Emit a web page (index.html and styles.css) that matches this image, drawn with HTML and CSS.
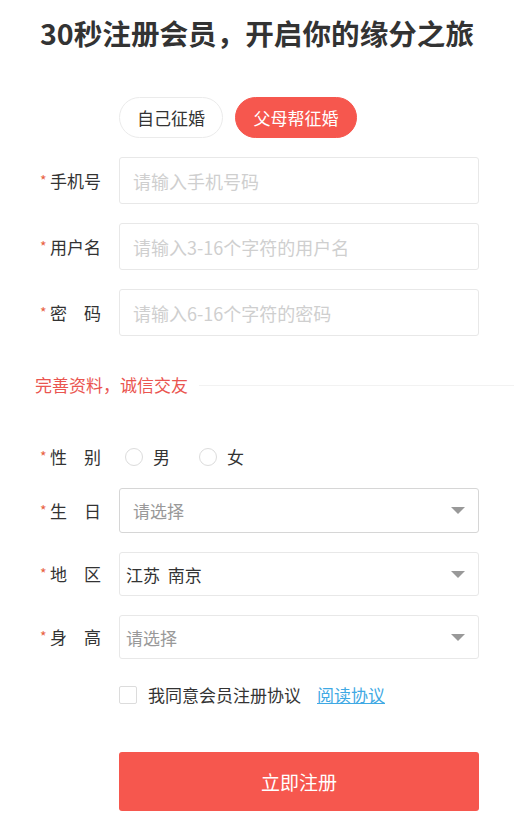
FILE: index.html
```html
<!DOCTYPE html>
<html lang="zh-CN">
<head>
<meta charset="utf-8">
<title>注册</title>
<link rel="stylesheet" href="styles.css">
</head>
<body>
<div class="page">
  <h1 class="title">30秒注册会员，开启你的缘分之旅</h1>

  <div class="tabs">
    <span class="tab">自己征婚</span>
    <span class="tab tab-active">父母帮征婚</span>
  </div>

  <div class="row row-input first">
    <label class="lbl"><span class="star">*</span><span class="txt">手机号</span></label>
    <input class="field" type="text" placeholder="请输入手机号码">
  </div>
  <div class="row row-input">
    <label class="lbl"><span class="star">*</span><span class="txt">用户名</span></label>
    <input class="field" type="text" placeholder="请输入3-16个字符的用户名">
  </div>
  <div class="row row-input">
    <label class="lbl"><span class="star">*</span><span class="txt">密码</span></label>
    <input class="field" type="password" placeholder="请输入6-16个字符的密码">
  </div>

  <div class="section">
    <span class="section-text">完善资料，诚信交友</span>
    <span class="section-line"></span>
  </div>

  <div class="row row-gender">
    <label class="lbl"><span class="star">*</span><span class="txt">性别</span></label>
    <div class="radios">
      <span class="radio"></span><span class="radio-text">男</span>
      <span class="radio"></span><span class="radio-text">女</span>
    </div>
  </div>

  <div class="row row-select first-select">
    <label class="lbl"><span class="star">*</span><span class="txt">生日</span></label>
    <div class="select sel-first"><span class="ph">请选择</span><span class="caret"></span></div>
  </div>
  <div class="row row-select">
    <label class="lbl"><span class="star">*</span><span class="txt">地区</span></label>
    <div class="select"><span class="val">江苏 南京</span><span class="caret"></span></div>
  </div>
  <div class="row row-select">
    <label class="lbl"><span class="star">*</span><span class="txt">身高</span></label>
    <div class="select"><span class="ph">请选择</span><span class="caret"></span></div>
  </div>

  <div class="row row-agree">
    <span class="lbl"></span>
    <div class="agree">
      <span class="checkbox"></span>
      <span class="agree-text">我同意会员注册协议</span>
      <a class="agree-link" href="#">阅读协议</a>
    </div>
  </div>

  <div class="row row-submit">
    <span class="lbl"></span>
    <button class="submit" type="button">立即注册</button>
  </div>
</div>
</body>
</html>
```

FILE: styles.css
```css
* { box-sizing: border-box; }
html, body { margin: 0; padding: 0; background: #fff; }
body {
  font-family: "Noto Sans CJK SC", "Noto Sans", sans-serif;
  color: #333;
}
.page { width: 514px; padding-top: 13px; padding-bottom: 12px; }

.title {
  margin: 0;
  font-size: 28.6px;
  line-height: 40px;
  font-weight: 700;
  text-align: center;
  color: #333;
}

.tabs {
  display: flex;
  gap: 12px;
  margin-top: 44px;
  padding-left: 119px;
}
.tab {
  height: 41px;
  line-height: 39px;
  padding: 0 17px;
  border: 1px solid #ebebeb;
  border-radius: 21px;
  font-size: 17px;
  color: #333;
}
.tab-active {
  background: #f6574e;
  border-color: #f6574e;
  color: #fff;
  padding: 0 17.5px;
}

.row { display: flex; align-items: center; }
.lbl {
  width: 119px;
  flex: none;
  display: flex;
  align-items: center;
  padding-left: 40px;
  font-size: 17px;
  color: #333;
}
.star {
  width: 10px;
  color: #e8613f;
  font-size: 14px;
  line-height: 1;
  position: relative;
  top: -1px;
}
.txt {
  width: 51px;
  text-align: justify;
  text-align-last: justify;
  line-height: 24px;
}

.row-input { margin-top: 19px; }
.field {
  width: 360px;
  height: 47px;
  border: 1px solid #e8e8e8;
  border-radius: 3px;
  padding: 0 13px;
  font-family: inherit;
  font-size: 18px;
  color: #333;
  outline: none;
}
.field::placeholder { color: #cfcfcf; }

.section {
  display: flex;
  align-items: center;
  margin-top: 37px;
  padding-left: 35px;
}
.section-text {
  font-size: 17px;
  line-height: 24px;
  color: #ea5550;
}
.section-line {
  flex: 1;
  height: 1px;
  background: #f2f2f2;
  margin-left: 11px;
}

.row-gender { margin-top: 48px; }
.radios { display: flex; align-items: center; padding-left: 6px; }
.radio {
  width: 18px;
  height: 18px;
  border: 1px solid #dcdcdc;
  border-radius: 50%;
}
.radio-text {
  font-size: 17px;
  line-height: 24px;
  margin-left: 10px;
  margin-right: 29px;
}

.row-select { margin-top: 19px; }
.row-select.first-select { margin-top: 19px; }
.select {
  width: 360px;
  height: 44px;
  border: 1px solid #e8e8e8;
  border-radius: 3px;
  display: flex;
  align-items: center;
  justify-content: space-between;
  padding: 0 13px 0 6px;
  font-size: 17px;
}
.select.sel-first {
  height: 45px;
  padding-left: 13px;
  border-color: #d6d6d6;
}
.ph { color: #999; }
.val { color: #333; word-spacing: 4px; }
.caret {
  width: 0;
  height: 0;
  border-left: 7px solid transparent;
  border-right: 7px solid transparent;
  border-top: 7px solid #999;
}

.row-agree { margin-top: 24px; }
.agree { display: flex; align-items: center; }
.checkbox {
  width: 18px;
  height: 18px;
  border: 1px solid #dcdcdc;
  border-radius: 2px;
}
.agree-text {
  margin-left: 11px;
  font-size: 17px;
  line-height: 24px;
  color: #333;
}
.agree-link {
  margin-left: 16px;
  font-size: 17px;
  line-height: 24px;
  color: #3fa9e4;
  text-decoration: underline;
}

.row-submit { margin-top: 45px; }
.submit {
  width: 360px;
  height: 59px;
  border: none;
  border-radius: 3px;
  background: #f6574e;
  color: #fff;
  font-family: inherit;
  font-size: 19px;
  cursor: pointer;
}
```
